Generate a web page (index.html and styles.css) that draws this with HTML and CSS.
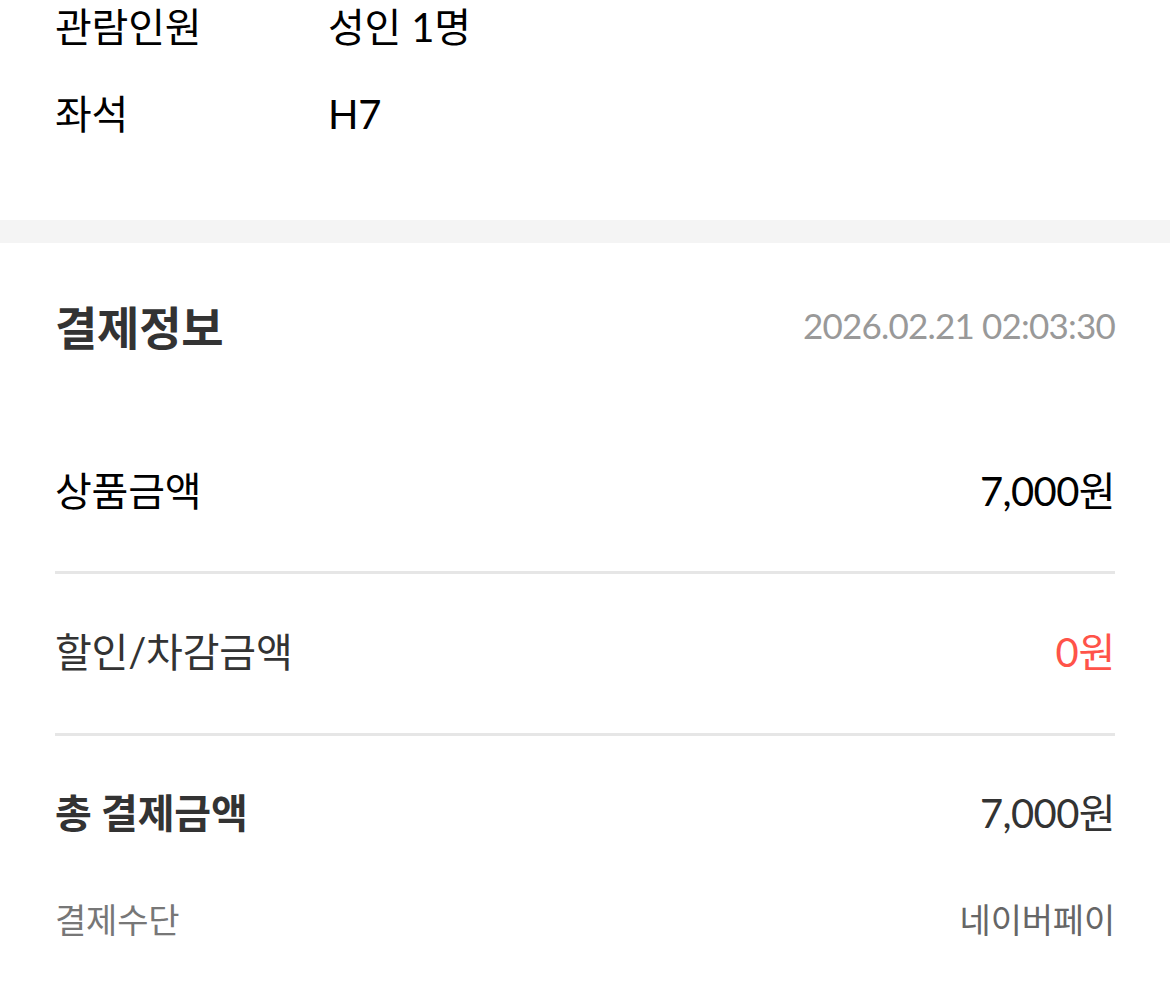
FILE: index.html
```html
<!DOCTYPE html>
<html lang="ko">
<head>
<meta charset="utf-8">
<title>결제정보</title>
<link rel="stylesheet" href="styles.css">
</head>
<body>
<section class="info">
  <div class="info-row"><span class="info-label">관람인원</span><span class="info-value">성인 1명</span></div>
  <div class="info-row"><span class="info-label">좌석</span><span class="info-value">H7</span></div>
</section>
<div class="band"></div>
<section class="pay">
  <div class="pay-head">
    <h2 class="pay-title">결제정보</h2>
    <span class="pay-date">2026.02.21 02:03:30</span>
  </div>
  <div class="pay-row first"><span>상품금액</span><span class="amount">7,000원</span></div>
  <div class="pay-row disc"><span>할인/차감금액</span><span class="red">0원</span></div>
  <div class="pay-row total"><span class="bold">총 결제금액</span><span class="amount">7,000원</span></div>
  <div class="pay-method"><span>결제수단</span><span class="method-val">네이버페이</span></div>
</section>
</body>
</html>
```
FILE: styles.css
```css
html, body {
  margin: 0;
  padding: 0;
  background: #fff;
}
body {
  font-family: Lato, "Noto Sans CJK KR", sans-serif;
  color: #000;
  letter-spacing: -0.2px;
}
.info {
  padding: 0 55px 79px;
  display: flex;
  flex-direction: column;
  gap: 33px;
}
.info-row {
  display: flex;
  font-size: 40px;
  line-height: 54px;
}
.info-label {
  width: 273px;
}
.band {
  height: 23px;
  background: #f4f4f4;
}
.pay {
  padding: 52px 55px 40px;
}
.pay-head {
  display: flex;
  justify-content: space-between;
  align-items: center;
  height: 60px;
  margin-bottom: 54px;
}
.pay-title {
  margin: 0;
  font-size: 46px;
  font-weight: 700;
  color: #333;
}
.pay-date {
  font-size: 35px;
  color: #999;
  letter-spacing: -0.8px;
}
.pay-row {
  display: flex;
  justify-content: space-between;
  align-items: center;
  font-size: 40px;
  line-height: 60px;
  padding: 50px 0;
  border-bottom: 3px solid #e6e6e6;
}
.pay-row.first {
  padding: 52px 0 50px;
}
.pay-row.disc {
  color: #333;
  padding: 48px 0 51px;
}
.pay-row.total {
  color: #333;
  padding: 47px 0 0;
  border-bottom: none;
}
.amount {
  letter-spacing: -0.6px;
}
.bold {
  font-weight: 700;
}
.red {
  color: #ff5349;
}
.pay-method {
  display: flex;
  justify-content: space-between;
  align-items: center;
  margin-top: 52px;
  font-size: 34px;
  line-height: 50px;
  color: #777;
}
.method-val {
  color: #666;
}
```
